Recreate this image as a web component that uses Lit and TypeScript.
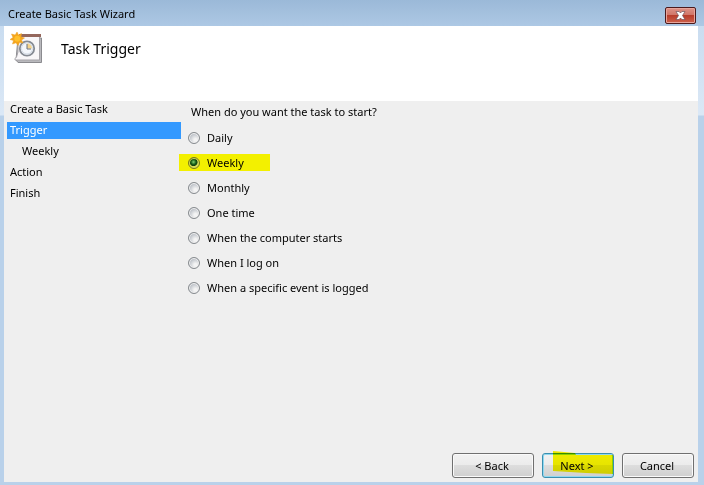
import { LitElement, html, css, svg } from "lit";
import { customElement, state } from "lit/decorators.js";
import { classMap } from "lit/directives/class-map.js";

const taskIcon = svg`
  <path d="M9 8 H32.500 V32.500 H9 L7 30 Z" fill="#b9b9bd" stroke="#8b8b8f"/>
  <path d="M9 6 H30.500 V30 H6 Q5.500 28.500 7.500 27 L9 22 Z" fill="#f8f6f8" stroke="#a5a3a8"/>
  <rect x="10" y="4" width="22" height="3" fill="#94675c"/>
  <circle cx="18" cy="18.500" r="7.200" fill="#f4f7fc" stroke="#858a93" stroke-width="1.800"/>
  <circle cx="18" cy="18.500" r="5.500" fill="none" stroke="#d4dbe6"/>
  <path d="M18 18.500 V13.500 A5 5 0 0 1 23 18.500 Z" fill="#f5d38c"/>
  <path d="M18 14 V19 H22" fill="none" stroke="#6b717d"/>
  <path d="M8 2 L9.500 5 L12.500 3.500 L12 6.800 L15.500 8 L12.500 10 L14 13 L10.500 12.500 L9 15.500 L7 12.800 L3.500 14 L4.500 10.500 L1 9.500 L4 7.500 L2.500 4 L6.200 5 Z" fill="#f5a51b" stroke="#e9a02c" stroke-width=".5"/>
  <circle cx="8.300" cy="8.700" r="3" fill="#ffc02d"/>`;

@customElement("app-root")
export class AppRoot extends LitElement {
  @state() private trigger = "Weekly";

  private steps = ["Create a Basic Task", "Trigger", "Weekly", "Action", "Finish"];
  private triggers = [
    "Daily",
    "Weekly",
    "Monthly",
    "One time",
    "When the computer starts",
    "When I log on",
    "When a specific event is logged",
  ];

  static styles = css`
    :host {
      display: block;
      font: 11px/17px "Noto Sans", "Open Sans", sans-serif;
      color: #000;
    }
    * {
      box-sizing: border-box;
    }
    .window {
      display: flex;
      flex-direction: column;
      min-height: 100vh;
      padding: 0 6px 3px 4px;
      background:
        linear-gradient(#9bb9d8, #adc8e4 26px, transparent 26px),
        linear-gradient(#c4d9ee, #dbe8f6 115px, #b9d1ea 116px);
    }
    .titlebar {
      display: flex;
      align-items: center;
      justify-content: space-between;
      height: 26px;
      padding: 3px 2px 0 4px;
    }
    h1,
    h2,
    ul {
      margin: 0;
      padding: 0;
      font: inherit;
    }
    .close {
      display: flex;
      align-items: center;
      justify-content: center;
      width: 31px;
      height: 17px;
      padding: 0;
      border: 1px solid #4b1a1c;
      border-radius: 2px;
      box-shadow: inset 0 0 0 1px #e8a59b;
      background: linear-gradient(#dd9287, #cf7365 50%, #b83d2b 50%, #cc604b);
    }
    .titlebar h1 {
      padding-bottom: 2px;
    }
    .titlebar .close {
      margin-top: 1px;
    }
    .header {
      display: flex;
      align-items: flex-start;
      gap: 16px;
      height: 75px;
      padding: 4px 5px;
      background: #fff;
    }
    .header h2 {
      padding-top: 9px;
      font-size: 14px;
      line-height: 20px;
    }
    .body {
      flex: 1;
      display: flex;
      align-items: flex-start;
      background: #efefef;
    }
    .steps {
      flex: 0 0 177px;
      display: flex;
      flex-direction: column;
      gap: 4px;
      padding-left: 3px;
      list-style: none;
    }
    .steps li {
      padding: 0 0 2px 3px;
      line-height: 15px;
    }
    .steps .current {
      background: #3399ff;
      color: #fff;
    }
    .steps .sub {
      padding-left: 15px;
    }
    fieldset {
      flex: 1;
      min-width: 0;
      margin: 0;
      padding: 2px 0 0;
      border: 0;
    }
    legend {
      float: left;
      width: 100%;
      padding: 0 0 0 10px;
      margin-bottom: 9px;
    }
    .options {
      clear: both;
      display: flex;
      flex-direction: column;
      align-items: flex-start;
      gap: 8px;
    }
    .option {
      display: flex;
      align-items: center;
      gap: 7px;
      margin-left: -2px;
      padding: 0 26px 0 9px;
    }
    .option.marked {
      background: #f3f000;
    }
    .option input {
      appearance: none;
      width: 12px;
      height: 12px;
      margin: 0;
      border: 1px solid #868a8e;
      border-radius: 50%;
      background: radial-gradient(circle at 65% 70%, #f4f4f4 15%, #b9bec5 70%);
      box-shadow: inset 0 0 0 1px #f2f2f2;
    }
    .option input:checked {
      border-color: #77791c;
      background: radial-gradient(circle at 45% 40%, #70bd62 5%, #175e16 30%, #123f10 45%, #d8dd58 55%);
      box-shadow: inset 0 0 0 1px #d8dd58;
    }
    .footer {
      display: flex;
      justify-content: flex-end;
      gap: 8px;
      padding: 0 4px 4px;
      background: #efefef;
    }
    .footer button {
      width: 72px;
      height: 25px;
      padding: 0 2px 1px 0;
      border: 1px solid #707070;
      border-radius: 3px;
      box-shadow: inset 0 0 0 1px #fafafa;
      background: linear-gradient(#f2f2f2, #ebebeb 50%, #dddddd 50%, #cfcfcf);
      font: inherit;
      color: inherit;
    }
    .footer .back {
      width: 82px;
    }
    .footer .next {
      position: relative;
      border-color: #3a8fb0;
      box-shadow: inset 0 0 0 1px #8fd8f0;
    }
    .marker {
      position: absolute;
      top: -3px;
      left: 9px;
      width: 62px;
      height: 24px;
      mix-blend-mode: multiply;
    }
  `;

  render() {
    return html`
      <main class="window">
        <header class="titlebar">
          <h1>Create Basic Task Wizard</h1>
          <button class="close" aria-label="Close">
            <svg width="11" height="9" viewBox="0 0 11 9">
              <path d="M1 .5 H4 L5.500 2 L7 .5 H10 L7.500 4.500 L10 8.500 H7 L5.500 7 L4 8.500 H1 L3.500 4.500 Z" fill="#fff" stroke="#5c4650" stroke-width=".6" />
            </svg>
          </button>
        </header>
        <section class="header">
          <svg width="36" height="36" viewBox="0 0 36 36" aria-hidden="true">${taskIcon}</svg>
          <h2>Task Trigger</h2>
        </section>
        <div class="body">
          <ul class="steps">
            ${this.steps.map(
              (step) => html`<li class=${classMap({ current: step === "Trigger", sub: step === "Weekly" })}>${step}</li>`
            )}
          </ul>
          <fieldset>
            <legend>When do you want the task to start?</legend>
            <div class="options">
              ${this.triggers.map(
                (name) => html`<label class=${classMap({ option: true, marked: name === "Weekly" })}>
                  <input
                    type="radio"
                    name="trigger"
                    .checked=${this.trigger === name}
                    @change=${() => (this.trigger = name)}
                  />${name}
                </label>`
              )}
            </div>
          </fieldset>
        </div>
        <footer class="footer">
          <button class="back">&lt; Back</button>
          <button class="next">
            Next &gt;
            <svg class="marker" viewBox="0 0 62 24" aria-hidden="true">
              <path d="M1 0 L23 2 L24 4 H61 V23 L34 22 L1 20 Z" fill="#fbf800" />
            </svg>
          </button>
          <button>Cancel</button>
        </footer>
      </main>
    `;
  }
}
